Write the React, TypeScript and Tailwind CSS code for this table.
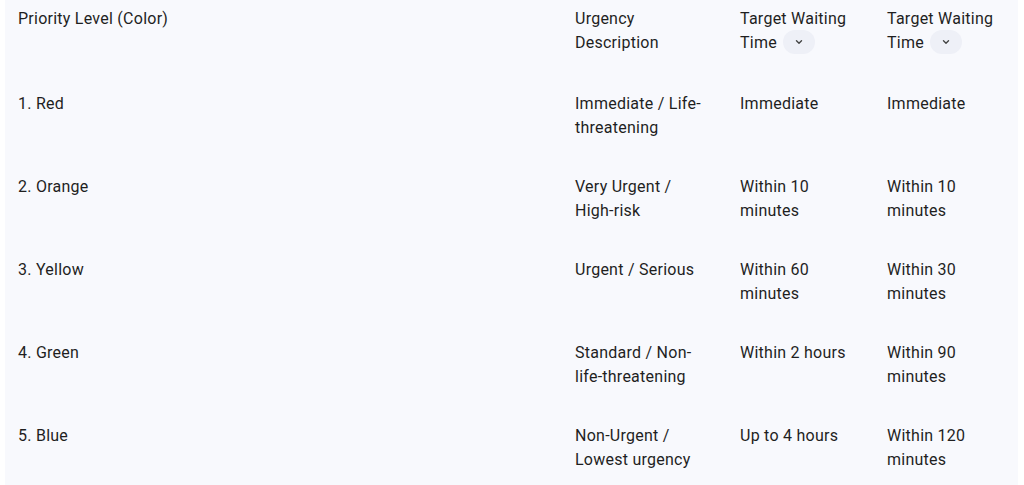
import React from "react";

const rows = [
  ["1. Red", "Immediate / Life-threatening", "Immediate", "Immediate"],
  ["2. Orange", "Very Urgent / High-risk", "Within 10 minutes", "Within 10 minutes"],
  ["3. Yellow", "Urgent / Serious", "Within 60 minutes", "Within 30 minutes"],
  ["4. Green", "Standard / Non-life-threatening", "Within 2 hours", "Within 90 minutes"],
  ["5. Blue", "Non-Urgent / Lowest urgency", "Up to 4 hours", "Within 120 minutes"],
];

function Chip() {
  return (
    <span className="inline-flex items-center justify-center w-[32px] h-[24px] rounded-full bg-[#eef0f7] align-middle ml-[6px] -mt-[2px]">
      <svg width="10" height="10" viewBox="0 0 10 10" fill="none">
        <path d="M2.5 3.8 L5 6.2 L7.5 3.8" stroke="#444" strokeWidth="1.4" strokeLinecap="round" strokeLinejoin="round" />
      </svg>
    </span>
  );
}

export default function App() {
  return (
    <div className="w-[1024px] h-[485px] bg-white overflow-hidden" style={{ fontFamily: "Roboto, 'Noto Sans', sans-serif" }}>
      <div className="ml-[5px] w-[1013px] h-[485px] bg-[#f8f9fd] text-[#1f1f1f] text-[16px] leading-[23.5px] tracking-[0.25px]">
        <div className="grid grid-cols-[557px_165px_147px_144px] pt-[7px] h-[74px]">
          <div className="pl-[13px]">Priority Level (Color)</div>
          <div className="pl-[13px] pr-[24px]">Urgency Description</div>
          <div className="pl-[13px] pr-[12px]">Target Waiting Time<Chip /></div>
          <div className="pl-[13px] pr-[12px]">Target Waiting Time<Chip /></div>
        </div>
        {rows.map((r, i) => (
          <div key={i} className="grid grid-cols-[557px_165px_147px_144px] h-[83px] pt-[18px]">
            <div className="pl-[13px]">{r[0]}</div>
            <div className="pl-[13px] pr-[24px]">{r[1]}</div>
            <div className="pl-[13px] pr-[12px]">{r[2]}</div>
            <div className="pl-[13px] pr-[12px]">{r[3]}</div>
          </div>
        ))}
      </div>
    </div>
  );
}
